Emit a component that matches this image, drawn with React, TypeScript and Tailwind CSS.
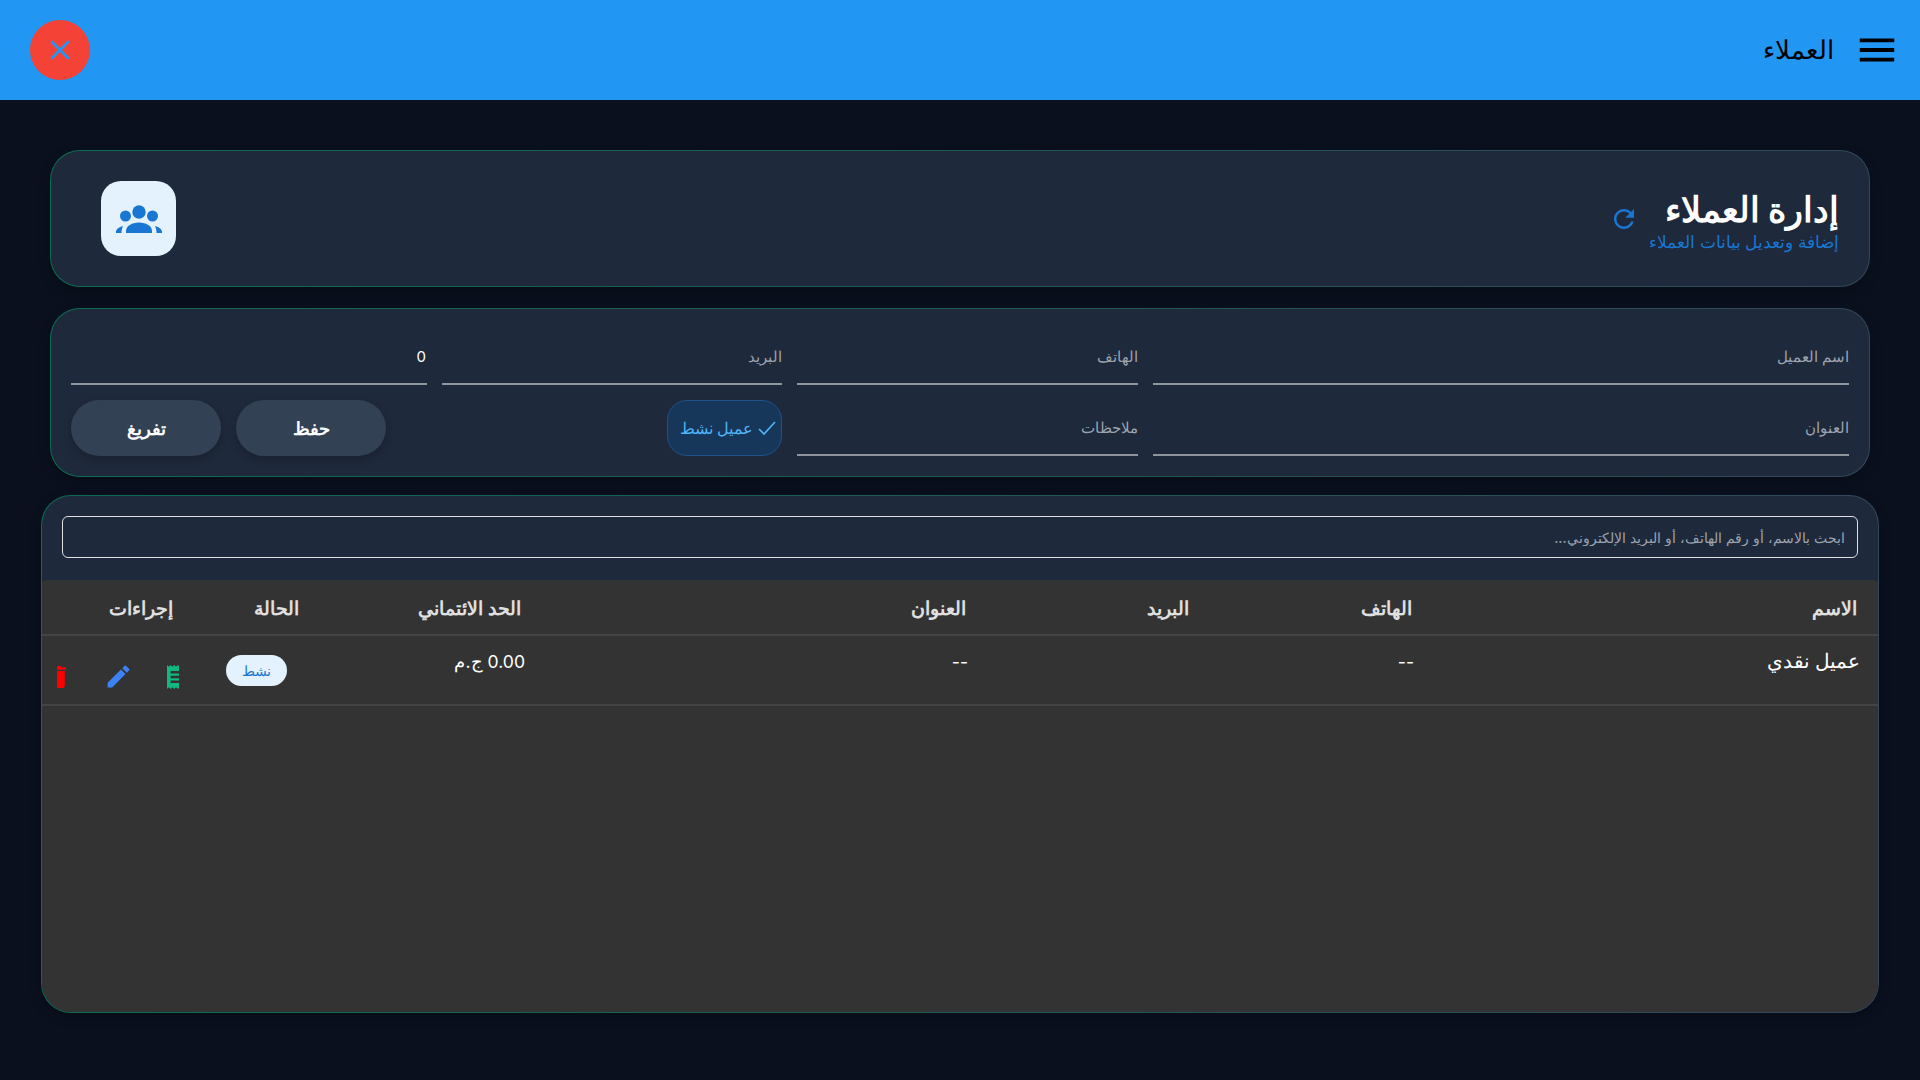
import React from 'react';
import { X } from 'lucide-react';

const cardBorder =
  'border border-transparent [background:linear-gradient(#1e293b,#1e293b)_padding-box,linear-gradient(90deg,#0b6b53,#1d5a55_50%,#33475a)_border-box] shadow-[0_4px_12px_rgba(0,0,0,0.25)]';

const fieldClass =
  'w-full h-[56px] bg-transparent border-b-2 border-[#8f959c] text-[15px] text-white placeholder:text-[#9ca3af] outline-none px-0';

const GroupsIcon: React.FC = () => (
  <svg width="46" height="28" viewBox="0 0 46 28" fill="#1976d2">
    <circle cx="9.5" cy="11" r="5.5" />
    <circle cx="36.5" cy="11" r="5.5" />
    <circle cx="23" cy="7" r="8.5" fill="#e3f2fd" />
    <circle cx="23" cy="7" r="6.7" />
    <path d="M10 28v-2c0-5 6-8.500 13-8.500s13 3.500 13 8.500v2z" />
    <path d="M0 28v-1c0-2.500 2.500-5 7-6-1 2-1.500 4.500-1.500 7z" />
    <path d="M46 28v-1c0-2.500-2.500-5-7-6 1 2 1.500 4.500 1.500 7z" />
  </svg>
);

const App: React.FC = () => {
  return (
    <div dir="rtl" className="min-h-screen bg-[#0a101e] [font-family:Inter,sans-serif]">
      <header className="h-[100px] bg-[#2196f3] flex items-center justify-between pr-[20px] pl-[30px]">
        <div className="flex items-center gap-[20px]">
          <svg width="46" height="46" viewBox="0 0 24 24" fill="#000">
            <path d="M3 18h18v-2H3v2zm0-5h18v-2H3v2zm0-7v2h18V6H3z" />
          </svg>
          <span className="text-[25.6px] font-medium text-black">العملاء</span>
        </div>
        <button className="w-[60px] h-[60px] rounded-full bg-[#f44336] flex items-center justify-center text-[#2196f3]">
          <X size={32} strokeWidth={2} />
        </button>
      </header>

      <main className="px-[41px] pt-[50px] flex flex-col">
        <section className={`${cardBorder} mx-[9px] h-[137px] rounded-[30px] flex items-center justify-between pr-[30px] pl-[50px]`}>
          <div className="flex items-center gap-[10px]">
            <div>
              <h1 className="text-[34.6px] leading-[46px] font-bold text-white">إدارة العملاء</h1>
              <p className="text-[16.6px] leading-[20px] text-[#1976d2]">إضافة وتعديل بيانات العملاء</p>
            </div>
            <svg width="30" height="30" viewBox="0 0 24 24" fill="#1976d2">
              <path d="M17.650 6.350C16.200 4.900 14.210 4 12 4c-4.420 0-7.990 3.580-7.990 8s3.570 8 7.990 8c3.730 0 6.840-2.550 7.730-6h-2.080c-.820 2.330-3.040 4-5.650 4-3.310 0-6-2.690-6-6s2.690-6 6-6c1.660 0 3.140.690 4.220 1.780L13 11h7V4l-2.350 2.350z" />
            </svg>
          </div>
          <div className="w-[75px] h-[75px] rounded-[20px] bg-[#e3f2fd] flex items-center justify-center">
            <GroupsIcon />
          </div>
        </section>

        <section className={`${cardBorder} mx-[9px] mt-[21px] h-[169px] rounded-[30px] p-[20px] grid grid-cols-[696px_341px_340px_356px] gap-x-[15px] gap-y-[15px]`}>
          <input className={fieldClass} placeholder="اسم العميل" />
          <input className={fieldClass} placeholder="الهاتف" />
          <input className={fieldClass} placeholder="البريد" />
          <input className={`${fieldClass} text-[14.4px] pl-0 pr-[1px]`} defaultValue="0" />
          <input className={fieldClass} placeholder="العنوان" />
          <input className={fieldClass} placeholder="ملاحظات" />
          <div className="flex">
            <div className="h-[56px] w-[115px] rounded-[20px] bg-[#16375a] border border-[#1f5288] flex items-center pr-[2px] gap-[2px] text-[#4fb3f6] text-[16px]">
              <svg width="24" height="24" viewBox="0 0 24 24" fill="none" stroke="#4fb3f6" strokeWidth="1.700">
                <path d="M4 13l5 5L20 6" />
              </svg>
              <span>عميل نشط</span>
            </div>
          </div>
          <div className="flex justify-end gap-[15px]">
            <button className="w-[150px] h-[56px] pt-[2px] rounded-[28px] bg-[#334155] text-white text-[17.6px] font-semibold shadow-[0_4px_8px_rgba(0,0,0,0.2)]">حفظ</button>
            <button className="w-[150px] h-[56px] pt-[2px] rounded-[28px] bg-[#334155] text-white text-[17.6px] font-semibold shadow-[0_4px_8px_rgba(0,0,0,0.2)]">تفريغ</button>
          </div>
        </section>

        <section className={`${cardBorder} mt-[18px] h-[518px] rounded-[30px] overflow-hidden flex flex-col`}>
          <div className="pt-[20px] px-[20px] pb-[22px]">
            <input
              className="w-full h-[42px] pt-[1px] bg-transparent border border-[#e0e0e0] rounded-[6px] px-[12px] text-[14.4px] text-white placeholder:text-[#9ca3af] outline-none"
              placeholder="ابحث بالاسم، أو رقم الهاتف، أو البريد الإلكتروني..."
            />
          </div>
          <div className="flex-1 bg-[#333333] rounded-t-[4px]">
            <table className="w-full table-fixed">
              <colgroup>
                <col className="w-[446px]" />
                <col className="w-[223px]" />
                <col className="w-[223px]" />
                <col className="w-[445px]" />
                <col className="w-[222px]" />
                <col className="w-[126px]" />
                <col className="w-[151px]" />
              </colgroup>
              <thead>
                <tr className="h-[55px] border-b-2 border-[#444444] text-[#e0e0e0] text-[19.2px] text-right">
                  <th className="pr-[21px] pt-[2px] font-semibold">الاسم</th>
                  <th className="pr-[20px] pt-[2px] font-semibold">الهاتف</th>
                  <th className="pr-[20px] pt-[2px] font-semibold">البريد</th>
                  <th className="pr-[20px] pt-[2px] font-semibold">العنوان</th>
                  <th className="pr-[20px] pt-[2px] font-semibold">الحد الائتماني</th>
                  <th className="pr-[20px] pt-[2px] font-semibold">الحالة</th>
                  <th className="pr-[20px] pt-[2px] font-semibold">إجراءات</th>
                </tr>
              </thead>
              <tbody>
                <tr className="h-[70px] border-b-2 border-[#444444] text-white text-[17.6px]">
                  <td className="align-top pt-[11px] pr-[18px] text-[19.6px] font-medium">عميل نقدي</td>
                  <td className="align-top pt-[13px] pr-[18px]">--</td>
                  <td className="align-top pt-[13px] pr-[18px]"></td>
                  <td className="align-top pt-[13px] pr-[18px]">--</td>
                  <td className="align-top pt-[13px] pr-[16px]">0.00 ج.م</td>
                  <td className="align-top pt-[19px] pr-[32px]">
                    <span className="inline-flex w-[61px] h-[31px] rounded-full bg-[#e3f2fd] text-[#1976d2] text-[14px] items-center justify-center">نشط</span>
                  </td>
                  <td className="align-top pt-[26px] pr-[14px]">
                    <div className="flex items-center h-[29px]">
                      <svg width="12" height="24" viewBox="3 2 10 20" fill="#10b981">
                        <path d="M18 17H6v-2h12v2zm0-4H6v-2h12v2zm0-4H6V7h12v2zM3 22l1.500-1.500L6 22l1.500-1.500L9 22l1.500-1.500L12 22l1.500-1.500L15 22l1.500-1.500L18 22l1.500-1.500L21 22V2l-1.500 1.500L18 2l-1.500 1.500L15 2l-1.500 1.500L12 2l-1.500 1.500L9 2 7.500 3.500 6 2 4.500 3.500 3 2v20z" />
                      </svg>
                      <svg className="mr-[34px]" width="29" height="29" viewBox="0 0 24 24" fill="#3b82f6">
                        <path d="M3 17.250V21h3.750L17.810 9.940l-3.750-3.750L3 17.250zM20.710 7.040c.390-.390.390-1.020 0-1.410l-2.340-2.340c-.390-.390-1.020-.390-1.410 0l-1.830 1.830 3.750 3.750 1.830-1.830z" />
                      </svg>
                      <svg className="mr-[38px]" width="9" height="22" viewBox="11.600 3 7.400 18" fill="#ff0000">
                        <path d="M6 19c0 1.100.900 2 2 2h8c1.100 0 2-.900 2-2V7H6v12zM19 4h-3.500l-1-1h-5l-1 1H5v2h14V4z" />
                      </svg>
                    </div>
                  </td>
                </tr>
              </tbody>
            </table>
          </div>
        </section>
      </main>
    </div>
  );
};

export default App;
